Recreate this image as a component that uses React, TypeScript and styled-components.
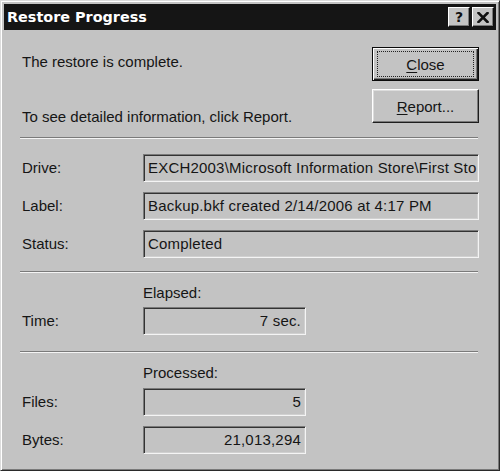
import React from 'react';
import styled, { createGlobalStyle, css } from 'styled-components';

const Global = createGlobalStyle`
  html, body { margin: 0; padding: 0; background: #c3c3c3; }
  body { font-family: "Liberation Sans", Arial, sans-serif; color: #151515; }
`;

const Window = styled.div`
  box-sizing: border-box;
  width: 500px;
  height: 471px;
  background: #c3c3c3;
  border: 1px solid;
  border-color: #dcdcdc #2a2a2a #2a2a2a #dcdcdc;
  box-shadow: inset 1px 1px #ffffff, inset -1px -1px #7a7a7a;
  padding: 3px;
  display: flex;
  flex-direction: column;
`;

const TitleBar = styled.div`
  height: 26px;
  flex: none;
  background: #151515;
  display: flex;
  align-items: center;
  padding: 0 2px 0 3px;
  gap: 2px;
`;

const TitleText = styled.div`
  flex: 1;
  color: #ffffff;
  font-family: "DejaVu Sans", Verdana, sans-serif;
  font-weight: bold;
  font-size: 14.4px;
  line-height: 18px;
  white-space: nowrap;
`;

const CaptionButton = styled.div`
  box-sizing: border-box;
  width: 22px;
  height: 20px;
  background: #c3c3c3;
  border: 1px solid;
  border-color: #ffffff #111111 #111111 #ffffff;
  box-shadow: inset -1px -1px #7a7a7a;
  display: flex;
  align-items: center;
  justify-content: center;
  font-family: "DejaVu Sans", Verdana, sans-serif;
  font-weight: bold;
  font-size: 14px;
  line-height: 1;
  color: #111;
`;

const Body = styled.div`
  flex: 1;
  display: flex;
  flex-direction: column;
  padding: 17px 17px 0 18px;
  font-size: 15px;
`;

const TopGrid = styled.div`
  display: grid;
  grid-template-columns: 1fr 107px;
  grid-template-rows: 34px 34px;
  row-gap: 8px;
`;

const Message = styled.div<{ $last?: boolean }>`
  line-height: 18px;
  white-space: nowrap;
  ${p =>
    p.$last
      ? css`
          align-self: end;
          margin-bottom: -3px;
        `
      : css`
          align-self: center;
          margin-bottom: 4px;
        `}
`;

const Button = styled.button<{ $default?: boolean }>`
  position: relative;
  box-sizing: border-box;
  width: 107px;
  height: 34px;
  padding: 0;
  font-family: "Liberation Sans", Arial, sans-serif;
  font-size: 15px;
  color: #151515;
  background: #c3c3c3;
  cursor: default;
  ${p =>
    p.$default
      ? css`
          border: 1px solid #0a0a0a;
          box-shadow: inset 1px 1px #ffffff, inset -1px -1px #1e1e1e, inset -2px -2px #7a7a7a;
          &::after {
            content: '';
            position: absolute;
            inset: 3px 4px 3px 4px;
            border: 1px dotted #222;
          }
        `
      : css`
          border: 1px solid;
          border-color: #ffffff #1e1e1e #1e1e1e #ffffff;
          box-shadow: inset -1px -1px #7a7a7a, inset 1px 1px #dcdcdc;
        `}
`;

const Separator = styled.div<{ $top: number }>`
  margin: ${p => p.$top}px 1px 0 -2px;
  border-top: 1px solid #7a7a7a;
  border-bottom: 1px solid #f4f4f4;
`;

const FieldGrid = styled.div<{ $top: number; $fieldWidth: number }>`
  display: grid;
  grid-template-columns: 121px ${p => p.$fieldWidth}px;
  row-gap: 10px;
  margin-top: ${p => p.$top}px;
`;

const Label = styled.div`
  align-self: center;
  line-height: 18px;
  grid-column: 1;
`;

const Heading = styled.div<{ $gap: number }>`
  grid-column: 2;
  line-height: 18px;
  margin-bottom: ${p => p.$gap - 10}px;
`;

const Field = styled.div<{ $right?: boolean }>`
  grid-column: 2;
  box-sizing: border-box;
  height: 28px;
  border-top: 1px solid #7a7a7a;
  border-left: 1px solid #7a7a7a;
  border-right: 1px solid #f4f4f4;
  border-bottom: 1px solid #f4f4f4;
  box-shadow: inset 1px 1px #333333, inset -1px -1px #d0d0d0;
  display: flex;
  align-items: center;
  justify-content: ${p => (p.$right ? 'flex-end' : 'flex-start')};
  padding: 0 4px 0 4px;
  white-space: nowrap;
  overflow: hidden;
  line-height: 18px;
  letter-spacing: 0.2px;
`;

const U = styled.span`
  text-decoration: underline;
  text-underline-offset: 2px;
`;

const CloseGlyph = () => (
  <svg width="12" height="11" viewBox="0 0 12 11">
    <path d="M1.5 1 L10.5 10 M10.5 1 L1.5 10" stroke="#111" strokeWidth="2.6" strokeLinecap="square" />
  </svg>
);

export default function App() {
  return (
    <>
      <Global />
      <Window>
        <TitleBar>
          <TitleText>Restore Progress</TitleText>
          <CaptionButton>?</CaptionButton>
          <CaptionButton>
            <CloseGlyph />
          </CaptionButton>
        </TitleBar>
        <Body>
          <TopGrid>
            <Message>The restore is complete.</Message>
            <Button $default>
              <U>C</U>lose
            </Button>
            <Message $last>To see detailed information, click Report.</Message>
            <Button>
              <U>R</U>eport...
            </Button>
          </TopGrid>

          <Separator $top={14} />

          <FieldGrid $top={15} $fieldWidth={336}>
            <Label>Drive:</Label>
            <Field>EXCH2003\Microsoft Information Store\First Sto</Field>
            <Label>Label:</Label>
            <Field>Backup.bkf created 2/14/2006 at 4:17 PM</Field>
            <Label>Status:</Label>
            <Field>Completed</Field>
          </FieldGrid>

          <Separator $top={13} />

          <FieldGrid $top={11} $fieldWidth={163}>
            <Heading $gap={5}>Elapsed:</Heading>
            <Label>Time:</Label>
            <Field $right>7 sec.</Field>
          </FieldGrid>

          <Separator $top={16} />

          <FieldGrid $top={11} $fieldWidth={163}>
            <Heading $gap={6}>Processed:</Heading>
            <Label>Files:</Label>
            <Field $right>5</Field>
            <Label>Bytes:</Label>
            <Field $right>21,013,294</Field>
          </FieldGrid>
        </Body>
      </Window>
    </>
  );
}
